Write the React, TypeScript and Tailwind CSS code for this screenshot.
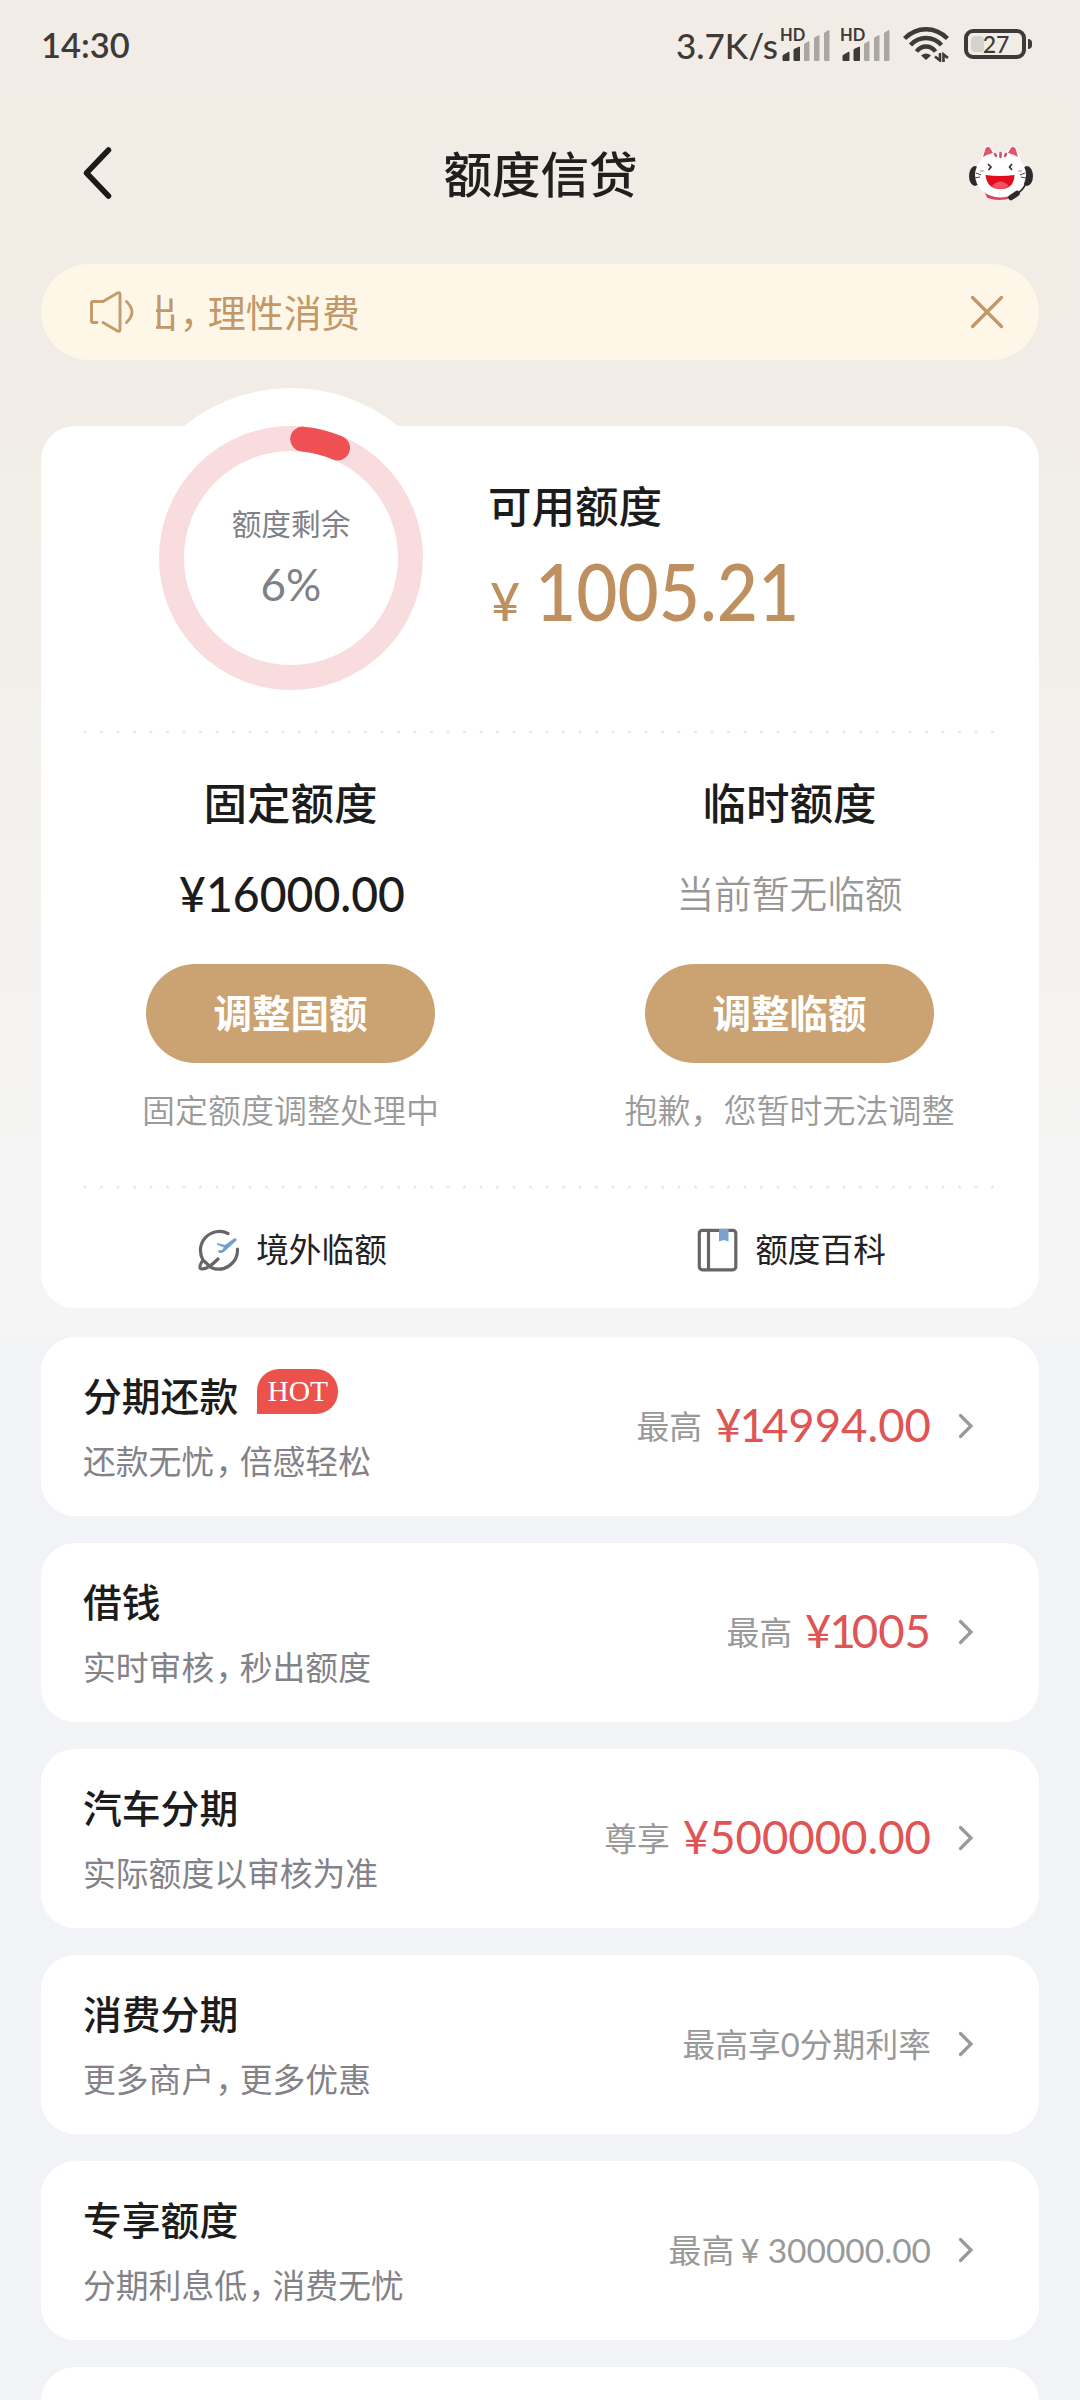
import { ReactNode } from "react";

type Row = {
  title: string;
  desc: string;
  hot?: boolean;
  label: string;
  amount?: string;
  plain?: string;
};

const rows: Row[] = [
  { title: "分期还款", desc: "还款无忧，倍感轻松", hot: true, label: "最高", amount: "¥14994.00" },
  { title: "借钱", desc: "实时审核，秒出额度", label: "最高", amount: "¥1005" },
  { title: "汽车分期", desc: "实际额度以审核为准", label: "尊享", amount: "¥500000.00" },
  { title: "消费分期", desc: "更多商户，更多优惠", label: "最高享0分期利率" },
  { title: "专享额度", desc: "分期利息低，消费无忧", label: "最高", plain: "300000.00" },
];

// full-width commas are set a bit tighter than the other glyphs
function Tight({ text }: { text: string }) {
  const parts = text.split("，");
  return (
    <>
      {parts.map((p, i) => (
        <span key={i}>
          {i > 0 && <span className="ml-[0.04em] tracking-[-0.26em]">，</span>}
          {p}
        </span>
      ))}
    </>
  );
}

// proportional figures: the "1" takes less room than the rest
function Amount({ text }: { text: string }) {
  return (
    <span className="mb-[3px] ml-[13px] text-[45.500px] leading-[48px] text-[#df5454]">
      {text.split("").map((c, i) => (
        <span key={i} className={c === "1" ? "-ml-[2px] -mr-[4px]" : ""}>{c}</span>
      ))}
    </span>
  );
}

function Signal() {
  return (
    <svg className="w-[52px] h-[36px] overflow-visible" viewBox="0 0 52 36">
      <text x="0" y="15" fontSize="16.500" fontWeight="700" fill="#3d3a37" fontFamily="Lato, sans-serif">HD</text>
      <path d="M3 34.500V29.500L9 26V34.500Z" fill="#3d3a37" stroke="#3d3a37" strokeLinejoin="round" />
      <path d="M14 34.500V23.500L19.500 21V34.500Z" fill="#3d3a37" stroke="#3d3a37" strokeLinejoin="round" />
      <path d="M24.500 34.500V18L29 15.500V34.500Z M34.500 34.500V12L39 9.500V34.500Z M44.500 34.500V7L49 4.500V34.500Z" fill="#aaa7a2" stroke="#aaa7a2" strokeLinejoin="round" />
    </svg>
  );
}

function Wifi() {
  return (
    <svg className="w-[46px] h-[36px]" viewBox="0 0 46 36" fill="none" stroke="#3d3a37" strokeWidth="4.400">
      <path d="M1.500 12.500Q11 3.200 23 3.200T44.500 12.500" />
      <path d="M7.500 19Q14 12 23 12T38.500 19" />
      <path d="M13.500 25.500Q17.500 20.500 23 20.500T32.500 25.500" />
      <path d="M23 34L18 29.500Q23 25.500 28 29.500Z" fill="#3d3a37" stroke="none" />
      <path d="M37 27V34.500L32 30.500M40.500 36V28.500L45 32" strokeWidth="2.600" />
    </svg>
  );
}

function Battery() {
  return (
    <div className="flex items-center gap-0.5">
      <div className="relative flex items-center w-[62px] h-[30px] rounded-[9px] border-4 border-[#3d3a37]">
        <div className="ml-[3px] w-[13px] h-4 rounded-[4px] bg-[#d5d2cd]" />
        <span className="absolute inset-0 pl-0.5 text-center text-[23px] leading-[23px] font-medium">27</span>
      </div>
      <div className="w-1 h-[10px] rounded-r-[4px] bg-[#3d3a37]" />
    </div>
  );
}

function Mascot() {
  return (
    <svg className="w-[64px] h-[56px]" viewBox="0 0 64 56">
      <ellipse cx="6" cy="31" rx="6" ry="10" fill="#2c2a2b" />
      <ellipse cx="58" cy="31" rx="6" ry="10" fill="#2c2a2b" />
      <path d="M17 48Q31 56 42 49V52Q30 56 19 52Z" fill="#d7465c" stroke="#d7465c" strokeWidth="2" />
      <path d="M12 16L15 4Q17 0 20 1L28 9Z" fill="#fff" />
      <path d="M52 16L48 4Q46 0 43 1L36 9Z" fill="#fff" />
      <ellipse cx="31.500" cy="30" rx="25.500" ry="22.500" fill="#fff" />
      <path d="M14 12L16.500 3.500Q19 0 21.500 3.500L24 8Q19 9 14 12Z" fill="#e4526d" />
      <path d="M49 12L46.500 3.500Q44 0 41.500 3.500L39 8Q44 9 49 12Z" fill="#e4526d" />
      <path d="M31.500 8V12M26 9L27 11M37 9L36 11" stroke="#c95566" strokeWidth="2.600" strokeLinecap="round" />
      <path d="M19 19L22 22L19.500 25M43 19L40.500 22L43 25" fill="none" stroke="#2c2a2b" strokeWidth="1.600" />
      <path d="M7 28L12 30M6 33L11 32M56 28L51 30M57 33L52 32" stroke="#444" strokeWidth="1" />
      <path d="M11 26H15M49 26H53" stroke="#f7b7bd" strokeWidth="2" />
      <path d="M16.500 30Q31 32 45.500 30Q45 44 31.500 44Q18 44 16.500 30Z" fill="#e00d20" />
      <path d="M23 41Q31 32 40 41Q36 44 31 44Q26 44 23 41Z" fill="#f05060" />
      <path d="M57 38Q54 46 46 50" fill="none" stroke="#2c2a2b" strokeWidth="1.800" />
      <path d="M42 52.500L48 48.500" stroke="#2c2a2b" strokeWidth="5.500" strokeLinecap="round" />
    </svg>
  );
}

function Speaker() {
  return (
    <svg className="w-[44px] h-[42px]" viewBox="0 0 44 42" fill="none" stroke="#c59c69" strokeWidth="2.900" strokeLinecap="round" strokeLinejoin="round">
      <path d="M7 31.500H3Q1.500 31.500 1.500 30V12Q1.500 10.500 3 10.500H13L27.500 2Q30 0.800 30 3.500V38.500Q30 41.200 27.500 40L13 31.500" />
      <path d="M36.500 10.500Q42 16 42 21T36.500 31.500" />
    </svg>
  );
}

function PlaneIcon() {
  return (
    <svg className="w-[42px] h-[42px]" viewBox="0 0 42 42" fill="none" strokeLinecap="round">
      <path d="M30 4.500A19 19 0 0 0 5 31Q0.500 38 2.500 39.500Q8 42 20 30" stroke="#66666a" strokeWidth="3.200" />
      <path d="M39.500 20A19 19 0 0 1 13 38.500L6 32" stroke="#66666a" strokeWidth="3.200" />
      <path d="M19 14L27 16L36 9.500Q39 8.500 38.500 11.500L27 22Q24 25 21 23.500L19.500 21.500L24 21L26 18.500L19 15.500Z" fill="#719fd1" />
    </svg>
  );
}

function BookIcon() {
  return (
    <svg className="w-[42px] h-[44px]" viewBox="0 0 42 44" fill="none" stroke="#66666a" strokeWidth="3.200">
      <rect x="2.300" y="2.300" width="36.500" height="39.500" rx="3" />
      <path d="M11.500 2.500V41.500" />
      <path d="M22 1H31.500V13.500L26.700 12L22 13.500Z" fill="#7aa2cf" stroke="none" />
    </svg>
  );
}

function Chevron() {
  return (
    <svg className="w-[16px] h-[26px]" viewBox="0 0 16 26" fill="none" stroke="#999" strokeWidth="3.200" strokeLinecap="round">
      <path d="M2.500 2.500L13 13L2.500 23.500" />
    </svg>
  );
}

function Dots() {
  return (
    <svg className="block w-[914px] h-[4px]" viewBox="0 0 914 4">
      <path d="M2 2H912" stroke="#e9e9e9" strokeWidth="3.200" strokeLinecap="round" strokeDasharray="0 16.500" />
    </svg>
  );
}

function LimitColumn({ title, value, button, note }: { title: string; value: ReactNode; button: string; note: string }) {
  return (
    <div className="flex flex-1 flex-col items-center">
      <h3 className="text-[43.500px] leading-[60px] font-medium text-[#1c1c1c]">{title}</h3>
      <div className="mt-[31px] h-[60px] leading-[60px]">{value}</div>
      <button className="mt-[40px] w-[289px] h-[99px] rounded-full bg-[#cba271] text-[38.500px] leading-[99px] font-bold text-white">{button}</button>
      <p className="mt-[23px] text-[33px] leading-[48px] text-[#9a9a9a] font-[350]">{note}</p>
    </div>
  );
}

function Ring() {
  return (
    <div className="relative ml-[118px] flex w-[264px] h-[264px] flex-col items-center justify-center">
      <div className="absolute -inset-[38px] rounded-full bg-white" />
      <svg className="absolute inset-0" viewBox="0 0 264 264" fill="none" strokeWidth="25">
        <circle cx="132" cy="132" r="119.500" stroke="#f9dcde" />
        <path d="M143.700 13.100A119.500 119.500 0 0 1 178.500 21.900" stroke="#ee5053" strokeLinecap="round" />
      </svg>
      <span className="relative -mt-[2px] text-[29.700px] leading-[44px] text-[#808187]">额度剩余</span>
      <span className="relative mt-[10px] text-[44px] leading-[56px] text-[#808187]">6%</span>
    </div>
  );
}

function ProductRow({ row }: { row: Row }) {
  return (
    <div className="flex h-[179px] shrink-0 items-center rounded-[34px] bg-white pl-[42px] pr-[65px]">
      <div className="flex flex-col">
        <div className="flex items-center">
          <h3 className="text-[38.800px] leading-[56px] font-medium text-[#1c1c1c]">{row.title}</h3>
          {row.hot && (
            <span className="mb-[9px] ml-[19px] w-[81px] h-[45px] rounded-[22px] rounded-bl-none bg-[#ec524c] text-center font-['Liberation_Serif',serif] text-[29.500px] leading-[45px] text-white">HOT</span>
          )}
        </div>
        <p className="mt-[14px] text-[32.800px] leading-[48px] text-[#828288]"><Tight text={row.desc} /></p>
      </div>
      <div className="ml-auto flex items-center text-[#999]">
        <span className="text-[32.800px] leading-[48px]">{row.label}</span>
        {row.amount && <Amount text={row.amount} />}
        {row.plain && (
          <span className="mb-[2px] flex text-[33.500px] leading-[48px]">
            <span className="ml-[6px] mr-[8px]">¥</span>
            {row.plain}
          </span>
        )}
        <div className="mb-[2px] ml-[27px]"><Chevron /></div>
      </div>
    </div>
  );
}

export default function App() {
  return (
    <div className="h-[2400px] w-[1080px] overflow-hidden bg-[#f2f3f7] font-[Lato,'Noto_Sans_CJK_SC',sans-serif]">
      <div className="h-[1337px] bg-linear-to-b from-[#f1ede6] from-30% to-[#f5f5f5] to-90% px-[41px]">
        <div className="flex h-[88px] items-center justify-between pr-[7px] text-[#3d3a37]">
          <span className="mt-0.5 text-[34.500px] leading-10 font-semibold">14:30</span>
          <div className="flex items-center">
            <span className="mt-0.5 text-[35px] leading-10 font-medium">3.7K/s</span>
            <div className="ml-0.5"><Signal /></div>
            <div className="ml-[8px]"><Signal /></div>
            <div className="ml-[11px]"><Wifi /></div>
            <div className="ml-[15px]"><Battery /></div>
          </div>
        </div>

        <header className="grid h-[176px] grid-cols-[64px_1fr_64px] items-center pl-[42px] pr-[6px] pb-[7px]">
          <svg className="w-[64px] h-[52px]" viewBox="0 0 64 52" fill="none" stroke="#1b1a18" strokeWidth="5.500" strokeLinecap="round" strokeLinejoin="round">
            <path d="M25.500 3L3.500 26L25.500 49" />
          </svg>
          <h1 className="mt-[3px] pr-[35px] text-center text-[48.500px] leading-[64px] font-medium text-[#201f1d]">额度信贷</h1>
          <Mascot />
        </header>

        <div className="flex h-24 items-center rounded-full bg-[#fef7e7] pl-[49px] pr-[35px] text-[#c2986a]">
          <Speaker />
          {/* marquee, the first glyph is partly scrolled out */}
          <div className="ml-[22px] flex flex-1 justify-start overflow-hidden">
            <span className="-ml-[16px] whitespace-nowrap text-[38px] leading-[56px]"><Tight text="出，理性消费" /></span>
          </div>
          <svg className="w-[34px] h-[34px]" viewBox="0 0 34 34" stroke="#c2986a" strokeWidth="3.400" strokeLinecap="round">
            <path d="M2.500 2.500L31.500 31.500M31.500 2.500L2.500 31.500" />
          </svg>
        </div>

        <section className="mt-[66px] h-[882px] rounded-[34px] bg-white">
          <div className="flex">
            <Ring />
            <div className="relative ml-[65px] pt-[50px]">
              <h2 className="text-[43.500px] leading-[60px] font-medium text-[#1c1c1c]">可用额度</h2>
              <div className="mt-[10px] flex items-baseline leading-[90px] text-[#be9060]">
                <span className="ml-[2px] text-[52px] font-medium">¥</span>
                <span className="ml-[15px] w-[260px] origin-left scale-x-[0.9] text-[79px] font-medium">1005.21</span>
              </div>
            </div>
          </div>
          <div className="relative mt-[40px] flex justify-center"><Dots /></div>
          <div className="mt-[39px] flex">
            <LimitColumn
              title="固定额度"
              value={<span className="ml-[4px] inline-block scale-x-[0.965] text-[48px] font-medium text-[#1c1c1c]">¥16000.00</span>}
              button="调整固额"
              note="固定额度调整处理中"
            />
            <LimitColumn
              title="临时额度"
              value={<span className="text-[37.700px] text-[#979797] font-[350]">当前暂无临额</span>}
              button="调整临额"
              note="抱歉，您暂时无法调整"
            />
          </div>
          <div className="mt-[51px] flex justify-center"><Dots /></div>
          <div className="flex h-[121px] items-center text-[32.700px] leading-[48px] text-[#222]">
            <div className="flex flex-1 items-center justify-center gap-[16px] pl-[4px]"><PlaneIcon />境外临额</div>
            <div className="flex flex-1 items-center justify-center gap-[16px] pl-[4px]"><BookIcon />额度百科</div>
          </div>
        </section>
      </div>

      <div className="flex flex-col gap-[27px] px-[41px]">
        {rows.map((row) => <ProductRow key={row.title} row={row} />)}
        <div className="h-[179px] shrink-0 rounded-[34px] bg-white" />
      </div>
    </div>
  );
}
